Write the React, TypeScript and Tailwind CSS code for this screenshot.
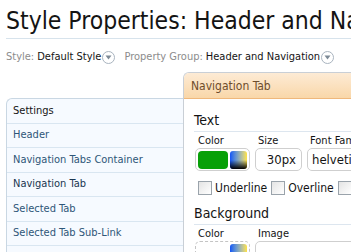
const tabs = [
  { label: 'Settings', kind: 'head' },
  { label: 'Header', kind: 'link' },
  { label: 'Navigation Tabs Container', kind: 'link' },
  { label: 'Navigation Tab', kind: 'active' },
  { label: 'Selected Tab', kind: 'link' },
  { label: 'Selected Tab Sub-Link', kind: 'link' },
  { label: 'Sub-Link Menu', kind: 'link' },
];

const DropIcon = () => (
  <span className="ml-[1px] inline-flex h-[13px] w-[13px] items-center justify-center rounded-full border border-[#a9b4bf] bg-white">
    <svg width="7" height="5" viewBox="0 0 7 5">
      <path d="M0.5 0.5 L6.5 0.5 L3.5 4.5 Z" fill="#7d8a96" />
    </svg>
  </span>
);

const Checkbox = ({ label }: { label: string }) => (
  <label className="flex items-center gap-[3px]">
    <span className="h-[14px] w-[14px] border border-[#9aa3ab] bg-gradient-to-br from-[#e4e4e4] to-white" />
    <span>{label}</span>
  </label>
);

const Swatch = ({ empty = false }: { empty?: boolean }) => (
  <div
    className={`flex h-[23px] w-[55px] items-center gap-[2px] rounded-[5px] p-[2px] ${
      empty ? 'border border-dashed border-[#c4c4c4]' : 'border border-[#cfcfcf]'
    }`}
  >
    <div className={`h-[18px] w-[31px] rounded-[4px] ${empty ? '' : 'bg-[#08a008]'}`} />
    <div className="h-[18px] w-[17px] overflow-hidden rounded-[3px] bg-gradient-to-r from-[#1552f5] to-[#ffe23a]">
      <div className="h-full w-full bg-gradient-to-b from-transparent via-transparent to-black" />
    </div>
  </div>
);

export default function App() {
  return (
    <div
      className="h-[252px] w-[351px] overflow-hidden bg-white pl-[6px]"
      style={{ fontFamily: '"DejaVu Sans Condensed", "DejaVu Sans", sans-serif' }}
    >
      <h1 className="whitespace-nowrap pt-[5px] text-[24.5px] leading-[32px] text-[#141414]">
        Style Properties: Header and Navigation
      </h1>
      <div className="mt-[1px] h-px bg-[#d7e3ec]" />

      <div className="mt-[11px] flex items-center whitespace-nowrap text-[11px] leading-[14px]">
        <span className="text-[#8c8c8c]">Style:</span>
        <span className="ml-[3px] text-[#141414]">Default Style</span>
        <DropIcon />
        <span className="ml-[9px] text-[#8c8c8c]">Property Group:</span>
        <span className="ml-[3px] text-[#141414]">Header and Navigation</span>
        <DropIcon />
      </div>

      <div className="mt-[8px] flex">
        <ul className="mt-[26px] w-[177px] shrink-0 overflow-hidden rounded-tl-[6px] border-l border-t border-[#c9d7e3] bg-[#f6faff] text-[11px]">
          {tabs.map((t) => (
            <li
              key={t.label}
              className={`flex h-[24.5px] items-center border-b border-[#d9e6f1] pl-[6px] ${
                t.kind === 'head'
                  ? 'text-[#141414]'
                  : t.kind === 'active'
                  ? 'text-[#1a3650]'
                  : 'text-[#2e5678]'
              }`}
            >
              {t.label}
            </li>
          ))}
        </ul>

        <div className="min-w-0 flex-1 overflow-hidden rounded-tl-[6px] border-l border-t border-[#c9cfd6] bg-white">
          <div className="flex h-[26px] items-center border-b border-[#efb87c] bg-gradient-to-b from-[#fdebd5] to-[#f9d7a9] pl-[7px] text-[12px] text-[#6e4d2c]">
            Navigation Tab
          </div>

          <div className="pl-[10px]">
            <h3 className="mt-[12px] border-b border-[#dde6ef] pb-[2px] text-[14px] leading-[18px] text-[#141414]">
              Text
            </h3>
            <div className="mt-[2px] flex gap-[5px] pl-[1px] text-[11px] text-[#141414]">
              <div>
                <div className="pl-[3px] leading-[14px]">Color</div>
                <Swatch />
              </div>
              <div>
                <div className="pl-[3px] leading-[14px]">Size</div>
                <div className="flex h-[23px] w-[47px] items-center justify-end rounded-[5px] border border-[#cfcfcf] pr-[5px] text-[13px]">
                  30px
                </div>
              </div>
              <div>
                <div className="whitespace-nowrap pl-[3px] leading-[14px]">Font Family</div>
                <div className="flex h-[23px] w-[120px] items-center rounded-[5px] border border-[#cfcfcf] pl-[4px] text-[13px]">
                  helvetica, arial
                </div>
              </div>
            </div>

            <div className="mt-[8px] flex gap-[4px] whitespace-nowrap pl-[4px] text-[12px] text-[#141414]">
              <Checkbox label="Underline" />
              <Checkbox label="Overline" />
              <Checkbox label="Line-through" />
            </div>

            <h3 className="mt-[7px] border-b border-[#dde6ef] pb-[2px] text-[14px] leading-[18px] text-[#141414]">
              Background
            </h3>
            <div className="mt-[2px] flex gap-[5px] pl-[1px] text-[11px] text-[#141414]">
              <div>
                <div className="pl-[3px] leading-[14px]">Color</div>
                <Swatch empty />
              </div>
              <div>
                <div className="pl-[3px] leading-[14px]">Image</div>
                <div className="h-[23px] w-[160px] rounded-[5px] border border-[#cfcfcf]" />
              </div>
            </div>
          </div>
        </div>
      </div>
    </div>
  );
}
